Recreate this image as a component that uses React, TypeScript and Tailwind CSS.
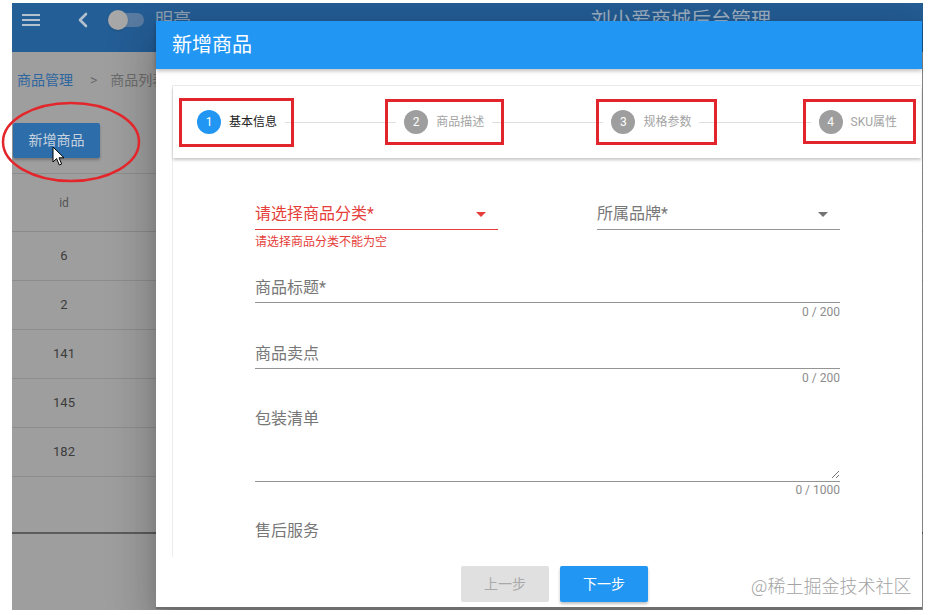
import { ChevronLeft } from 'lucide-react';

const steps = [
  { n: 1, label: '基本信息', active: true },
  { n: 2, label: '商品描述', active: false },
  { n: 3, label: '规格参数', active: false },
  { n: 4, label: 'SKU属性', active: false },
];

const ids = [6, 2, 141, 145, 182];

function ArrowDrop({ color }: { color: string }) {
  return (
    <svg width="24" height="24" viewBox="0 0 24 24">
      <path d="M7 10l5 5 5-5z" fill={color} />
    </svg>
  );
}

function Counter({ text }: { text: string }) {
  return <div className="mt-[3px] text-right text-[12px] leading-[12px] text-[#8c8c8c]">{text}</div>;
}

function Background() {
  return (
    <div className="flex h-full flex-col bg-[#9e9e9e]">
      <div className="flex h-[49px] shrink-0 items-start bg-[#245e96] pl-[10px] pt-[5px]">
        <div className="flex h-[24px] items-center">
          <svg width="18" height="12" viewBox="0 0 18 12">
            <rect y="0" width="18" height="2" fill="#b3c1cf" />
            <rect y="5" width="18" height="2" fill="#b3c1cf" />
            <rect y="10" width="18" height="2" fill="#b3c1cf" />
          </svg>
        </div>
        <ChevronLeft className="ml-[31px] text-[#b3c1cf]" size={24} strokeWidth={2.6} />
        <div className="relative ml-[13px] flex h-[24px] w-[36px] items-center">
          <div className="ml-[2px] h-[14px] w-[34px] rounded-full bg-[#5a7ca1]" />
          <div className="absolute left-0 top-[2px] h-[20px] w-[20px] rounded-full bg-[#a8a8a8] shadow" />
        </div>
        <div className="ml-[11px] h-[24px] text-[18px] leading-[24px] text-[#8fa1b4]">明亮</div>
        <div className="ml-[400px] h-[24px] text-[20px] leading-[24px] text-[#9fb1c4]">刘小爱商城后台管理</div>
      </div>

      <div className="ml-[5px] mt-[16px] flex h-[24px] items-center text-[14px]">
        <span className="text-[#2e66a0]">商品管理</span>
        <span className="ml-[17px] text-[#6c6c6c]">&gt;</span>
        <span className="ml-[13px] text-[#6c6c6c]">商品列表</span>
      </div>

      <div className="ml-[1px] mt-[31px] flex h-[35px] w-[87px] items-center justify-center rounded-[2px] bg-[#2d6daa] text-[14px] text-[#c6d2de] shadow-[0_2px_3px_rgba(0,0,0,0.25)]">
        新增商品
      </div>

      <div className="mt-[15px] border-t border-[#8d8d8d]">
        <div className="flex h-[58px] items-center border-b border-[#8a8a8a]">
          <div className="w-[104px] text-center text-[12px] text-[#555]">id</div>
        </div>
        {ids.map((id) => (
          <div key={id} className="flex h-[49px] items-center border-b border-[#8d8d8d]">
            <div className="w-[104px] text-center text-[13px] text-[#3b3b3b]">{id}</div>
          </div>
        ))}
        <div className="h-[57px] border-b-2 border-[#5c5c5c]" />
      </div>
    </div>
  );
}

function Stepper() {
  return (
    <div className="relative z-10 flex h-[72px] items-center bg-white shadow-[0_2px_3px_rgba(0,0,0,0.22)]">
      {steps.map((s, i) => (
        <div key={s.n} className="contents">
          {i > 0 && <div className="-mx-4 h-px flex-1 bg-[#e0e0e0]" />}
          <div className="relative flex items-center px-6">
            <div
              className={`flex h-6 w-6 items-center justify-center rounded-full text-[12px] text-white ${
                s.active ? 'bg-[#2196f3]' : 'bg-[#9e9e9e]'
              }`}
            >
              {s.n}
            </div>
            <div className={`ml-2 text-[12px] ${s.active ? 'text-[#212121]' : 'text-[#a3a3a3]'}`}>{s.label}</div>
          </div>
        </div>
      ))}
      <div className="absolute left-[6px] top-[12px] h-[49px] w-[115px] border-[3px] border-[#e2252d]" />
      <div className="absolute left-[212px] top-[13px] h-[46px] w-[119px] border-[3px] border-[#e2252d]" />
      <div className="absolute left-[423px] top-[13px] h-[46px] w-[121px] border-[3px] border-[#e2252d]" />
      <div className="absolute left-[630px] top-[13px] h-[45px] w-[113px] border-[3px] border-[#e2252d]" />
    </div>
  );
}

function Form() {
  return (
    <div className="ml-[82px] w-[585px] pt-[44px] text-[16px]">
      <div className="flex justify-between">
        <div className="w-[243px]">
          <div className="flex h-[28px] items-start justify-between border-b border-[#e53e3a]">
            <span className="leading-[24px] text-[#e53e3a]">请选择商品分类*</span>
            <div className="mr-[5px]">
              <ArrowDrop color="#e53e3a" />
            </div>
          </div>
          <div className="mt-[6px] text-[12px] leading-[12px] text-[#e53e3a]">请选择商品分类不能为空</div>
        </div>
        <div className="w-[243px]">
          <div className="flex h-[28px] items-start justify-between border-b border-[#949494]">
            <span className="leading-[24px] text-[#777]">所属品牌*</span>
            <div className="mr-[5px]">
              <ArrowDrop color="#737373" />
            </div>
          </div>
        </div>
      </div>

      <div className="mt-[28px] h-[27px] border-b border-[#949494]">
        <span className="leading-[24px] text-[#777]">商品标题*</span>
      </div>
      <Counter text="0 / 200" />

      <div className="mt-[24px] h-[27px] border-b border-[#949494]">
        <span className="leading-[24px] text-[#777]">商品卖点</span>
      </div>
      <Counter text="0 / 200" />

      <div className="relative mt-[23px] h-[75px] border-b border-[#949494]">
        <span className="leading-[24px] text-[#777]">包装清单</span>
        <svg className="absolute bottom-[3px] right-[1px]" width="8" height="8" viewBox="0 0 8 8">
          <path d="M8 1L1 8M8 5L5 8" stroke="#777" strokeWidth="1" />
        </svg>
      </div>
      <div className="mt-[2px] text-right text-[12px] leading-[12px] text-[#8c8c8c]">0 / 1000</div>

      <div className="mt-[23px] leading-[24px] text-[#777]">售后服务</div>
    </div>
  );
}

function Dialog() {
  return (
    <div className="absolute left-[144px] top-[18px] flex h-[588px] w-[766px] flex-col border-b-2 border-[#6e6e6e] bg-white shadow-[0_11px_15px_-7px_rgba(0,0,0,0.2),0_24px_38px_3px_rgba(0,0,0,0.14),0_9px_46px_8px_rgba(0,0,0,0.12)]">
      <div className="relative z-10 flex h-[48px] shrink-0 items-center bg-[#2196f3] pl-4 text-[20px] text-white shadow-[0_2px_4px_rgba(0,0,0,0.25)]">
        新增商品
      </div>
      <div className="h-[488px] shrink-0 overflow-hidden">
        <div className="ml-4 mr-[1px] mt-4 h-[600px] border-l border-t border-[#ececec] bg-white">
          <Stepper />
          <Form />
        </div>
      </div>
      <div className="flex flex-1 items-start pl-[305px] pt-[9px] text-[14px]">
        <div className="flex h-[36px] w-[88px] items-center justify-center rounded-[2px] bg-[#e0e0e0] text-[#a9a9a9]">
          上一步
        </div>
        <div className="ml-[11px] flex h-[36px] w-[88px] items-center justify-center rounded-[2px] bg-[#2196f3] text-white shadow-[0_2px_3px_rgba(0,0,0,0.25)]">
          下一步
        </div>
      </div>
    </div>
  );
}

export default function App() {
  return (
    <div className="relative h-[615px] w-[930px] overflow-hidden bg-white pl-[12px] pt-[3px] font-['Roboto','Noto_Sans_CJK_SC',sans-serif]">
      <div className="relative h-[607px] w-[911px] overflow-hidden">
        <Background />
        <Dialog />
      </div>

      <svg className="absolute left-0 top-[100px]" width="145" height="86" viewBox="0 0 145 86">
        <ellipse cx="71" cy="42" rx="68" ry="39" fill="none" stroke="#e3262c" strokeWidth="2.5" />
      </svg>
      <svg className="absolute left-[52px] top-[146px]" width="14" height="21" viewBox="0 0 14 21">
        <path d="M1 1L1 16L4.6 12.6L7.3 19L9.6 18L7 11.8L12 11.8Z" fill="#fff" stroke="#000" strokeWidth="1" strokeLinejoin="round" />
      </svg>

      <div className="absolute left-[751px] top-[573px] text-[18px] leading-[24px] text-[#a3a3a3] font-['Noto_Sans_CJK_SC',sans-serif] font-light">
        @稀土掘金技术社区
      </div>
    </div>
  );
}
